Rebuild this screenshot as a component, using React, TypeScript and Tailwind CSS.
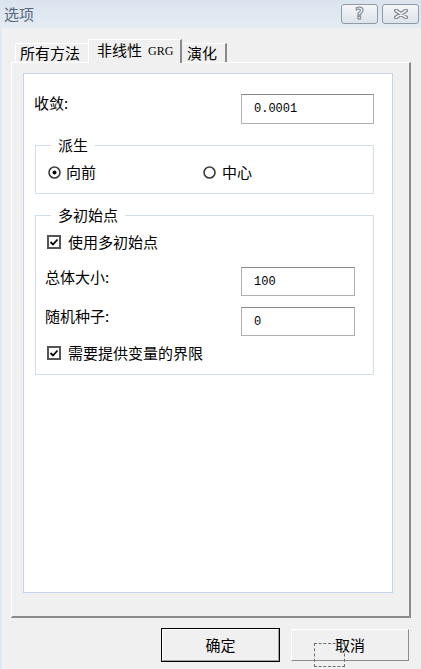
const cjk = { fontFamily: '"Noto Sans CJK SC", "Liberation Sans", sans-serif' };

function Radio({ checked }: { checked: boolean }) {
  return (
    <svg width="13" height="13" viewBox="0 0 13 13" className="shrink-0">
      <circle cx="6.5" cy="6.5" r="5.5" fill="#fff" stroke="#3c3c3c" strokeWidth="1.6" />
      {checked && <circle cx="6.5" cy="6.5" r="2" fill="#000" />}
    </svg>
  );
}

function Check() {
  return (
    <svg width="14" height="14" viewBox="0 0 14 14" className="shrink-0">
      <rect x="1" y="1" width="12" height="12" fill="#fff" stroke="#555" strokeWidth="2" />
      <path d="M3.5 7 L6 9.5 L10.5 4.5" fill="none" stroke="#000" strokeWidth="1.8" />
    </svg>
  );
}

function Field({ value, w }: { value: string; w: string }) {
  return (
    <div
      className={`${w} h-full bg-white border border-[#b0b0b0] border-t-[#8a8a8a] flex items-center pl-[12px] text-[12px] text-black`}
      style={{ fontFamily: '"Liberation Mono", monospace' }}
    >
      {value}
    </div>
  );
}

function Group({ label, className, children }: { label: string; className: string; children: React.ReactNode }) {
  return (
    <div className={`relative ml-[11px] w-[339px] border border-[#d3dde6] ${className}`}>
      <span className="absolute -top-[11px] left-[15px] bg-white px-[7px] leading-[20px]">{label}</span>
      {children}
    </div>
  );
}

export default function App() {
  return (
    <div className="w-[421px] h-[669px] overflow-hidden flex flex-col bg-[#f0f0f0] text-[15px] text-black" style={cjk}>
      <div className="h-[28px] shrink-0 flex items-start bg-gradient-to-b from-[#dbe4ee] to-[#e4ebf3]">
        <span className="ml-[4px] mt-[4px] leading-[20px] text-[#56687a]">选项</span>
        <div className="ml-auto mt-[4px] mr-[2px] flex gap-[4px]">
          <div className="w-[37px] h-[20px] rounded-[3px] border border-[#8f9aa6] bg-gradient-to-b from-[#f4f6f8] to-[#dde3ea] flex items-center justify-center">
            <span className="text-[15px] font-bold text-[#f4f4f4] leading-none" style={{ fontFamily: '"DejaVu Sans", sans-serif', WebkitTextStroke: '1px #7d8692' }}>?</span>
          </div>
          <div className="w-[37px] h-[20px] rounded-[3px] border border-[#8f9aa6] bg-gradient-to-b from-[#f4f6f8] to-[#dde3ea] flex items-center justify-center">
            <svg width="14" height="10" viewBox="0 0 14 10">
              <path d="M2 1.5 L12 8.5 M12 1.5 L2 8.5" stroke="#7d8692" strokeWidth="4" strokeLinecap="round" />
              <path d="M2 1.5 L12 8.5 M12 1.5 L2 8.5" stroke="#f2f2f2" strokeWidth="1.6" strokeLinecap="round" />
            </svg>
          </div>
        </div>
      </div>

      <div className="flex-1 border-l-2 border-[#dfe7f0] pl-[9px] pt-[11px]">
        <div className="h-[23px] flex items-end ml-[4px]">
          <div className="w-[73px] h-[19px] border-l border-t border-white flex items-center pl-[4px] leading-[18px]">所有方法</div>
          <div className="relative z-10 w-[94px] h-[24px] -mb-px bg-[#f0f0f0] border-l border-t border-white border-r-2 border-r-[#8a8a8a] flex items-start pt-[1px] pl-[8px] leading-[18px]">
            非线性
            <span className="ml-[6px] text-[12px] mt-[1px]" style={{ fontFamily: '"Liberation Serif", serif' }}>GRG</span>
          </div>
          <div className="w-[45px] h-[19px] border-t border-white border-r-2 border-r-[#8a8a8a] flex items-center pl-[5px] leading-[18px]">演化</div>
        </div>

        <div className="w-[400px] h-[556px] border-t border-l border-white border-r-2 border-b-2 border-r-[#8c8c8c] border-b-[#8c8c8c] pt-[10px] pl-[11px]">
          <div className="w-[370px] h-[520px] bg-white border border-[#c6d6e6] pt-[20px]">
            <div className="flex items-start h-[30px] pl-[10px]">
              <span className="w-[207px] -mt-[1px] leading-[20px]">收敛:</span>
              <Field value="0.0001" w="w-[133px]" />
            </div>

            <Group label="派生" className="mt-[21px] h-[49px] pt-[16px] pl-[12px]">
              <div className="flex items-center h-[20px]">
                <div className="w-[155px] flex items-center gap-[5px]">
                  <Radio checked />
                  <span className="leading-[20px]">向前</span>
                </div>
                <div className="flex items-center gap-[6px]">
                  <Radio checked={false} />
                  <span className="leading-[20px]">中心</span>
                </div>
              </div>
            </Group>

            <Group label="多初始点" className="mt-[21px] h-[160px] pt-[16px]">
              <div className="flex items-center h-[20px] pl-[11px] gap-[7px]">
                <Check />
                <span className="leading-[20px]">使用多初始点</span>
              </div>
              <div className="flex items-start h-[29px] mt-[15px] pl-[9px]">
                <span className="w-[196px] leading-[20px]">总体大小:</span>
                <Field value="100" w="w-[114px]" />
              </div>
              <div className="flex items-start h-[29px] mt-[11px] pl-[9px]">
                <span className="w-[196px] -mt-[1px] leading-[20px]">随机种子:</span>
                <Field value="0" w="w-[114px]" />
              </div>
              <div className="flex items-center h-[20px] mt-[7px] pl-[11px] gap-[7px]">
                <Check />
                <span className="leading-[20px]">需要提供变量的界限</span>
              </div>
            </Group>
          </div>
        </div>

        <div className="flex items-start gap-[11px] mt-[10px] pl-[150px]">
          <button className="w-[119px] h-[34px] border border-black bg-[#f0f0f0] flex items-center justify-center">
            <span className="w-full h-full border border-t-white border-l-white border-r-[#a0a0a0] border-b-[#a0a0a0] flex items-center justify-center leading-[20px]">确定</span>
          </button>
          <button className="relative w-[118px] h-[32px] mt-[1px] border border-t-white border-l-white border-r-[#8c8c8c] border-b-[#8c8c8c] bg-[#f0f0f0] flex items-center justify-center">
            <span className="leading-[20px]">取消</span>
            <span className="absolute left-[22px] top-[13px] w-[31px] h-[24px] border border-dashed border-[#707070]" />
          </button>
        </div>
      </div>
    </div>
  );
}
